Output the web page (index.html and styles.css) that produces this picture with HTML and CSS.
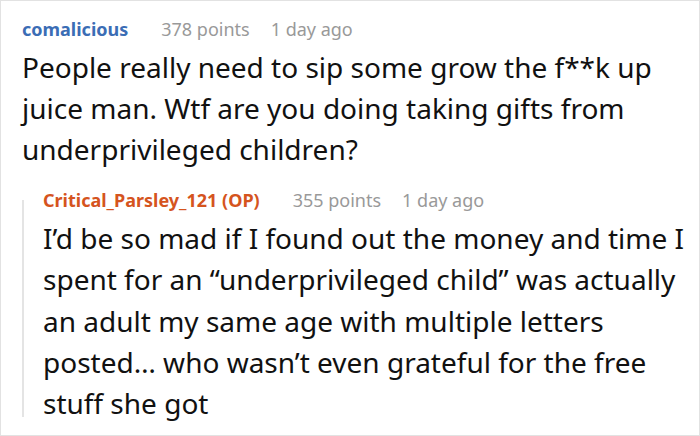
FILE: index.html
```html
<!DOCTYPE html>
<html>
<head>
<meta charset="utf-8">
<link rel="stylesheet" href="styles.css">
</head>
<body>
<div class="frame">
  <div class="comment">
    <div class="meta">
      <span class="user">comalicious</span>
      <span class="info">378 points</span>
      <span class="info">1 day ago</span>
    </div>
    <p class="body">People really need to sip some grow the f**k up juice man. Wtf are you doing taking gifts from underprivileged children?</p>
    <div class="reply">
      <div class="meta">
        <span class="user op">Critical_Parsley_121 (OP)</span>
        <span class="info">355 points</span>
        <span class="info">1 day ago</span>
      </div>
      <p class="body">I’d be so mad if I found out the money and time I spent for an “underprivileged child” was actually an adult my same age with multiple letters posted… who wasn’t even grateful for the free stuff she got</p>
    </div>
  </div>
</div>
</body>
</html>
```
FILE: styles.css
```css
html, body {
  margin: 0;
  padding: 0;
  background: #fff;
}
body {
  font-family: "Noto Sans", "Open Sans", sans-serif;
  color: #111;
}
.frame {
  width: 700px;
  height: 436px;
  box-sizing: border-box;
  border: 1px solid #e2e2e2;
  padding: 16px 7px 0 21px;
  overflow: hidden;
}
.meta {
  display: flex;
  gap: 21px;
  font-size: 18px;
  line-height: 24px;
  align-items: baseline;
  margin-bottom: 6px;
}
.user {
  font-weight: 700;
  color: #3b6db5;
  margin-right: 12px;
}
.user.op {
  color: #d5541e;
}
.info {
  color: #999;
}
.body {
  margin: 0;
  font-size: 28px;
  line-height: 41px;
  color: #111;
}
.reply {
  position: relative;
  margin-top: 18px;
  padding-left: 21px;
}
.reply .body {
  line-height: 41.25px;
}
.reply::before {
  content: "";
  position: absolute;
  left: 0;
  top: 12px;
  bottom: 7px;
  width: 2px;
  background: #e4e4e4;
}
```
